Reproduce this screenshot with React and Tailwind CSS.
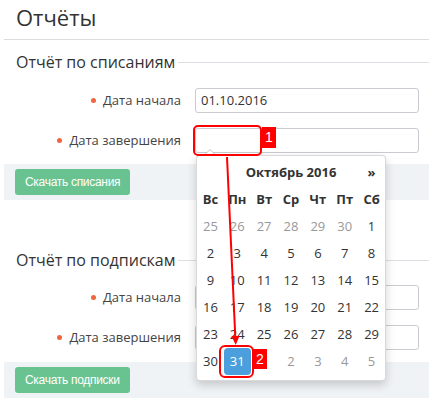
export default function App() {
  const weeks = [
    [25, 26, 27, 28, 29, 30, 1],
    [2, 3, 4, 5, 6, 7, 8],
    [9, 10, 11, 12, 13, 14, 15],
    [16, 17, 18, 19, 20, 21, 22],
    [23, 24, 25, 26, 27, 28, 29],
    [30, 31, 1, 2, 3, 4, 5],
  ];
  const days = ["Вс", "Пн", "Вт", "Ср", "Чт", "Пт", "Сб"];

  const Label = ({ text }) => (
    <div className="w-[177px] text-right text-[13px] text-[#444] leading-[25px]">
      <span className="inline-block w-[5px] h-[5px] rounded-full bg-[#f0653c] mr-[7px] align-middle relative -top-[1px]"></span>
      {text}
    </div>
  );
  const Input = ({ value }) => (
    <div className="ml-[14px] w-[224px] h-[25px] border border-[#c8ccd1] rounded-[3px] px-[5px] text-[13px] leading-[23px] text-[#333]">
      {value}
    </div>
  );
  const Heading = ({ text, mt }) => (
    <div className={`${mt} h-[22px] flex items-center pl-3 gap-[3px]`}>
      <span className="text-[16px] text-[#333] whitespace-nowrap">{text}</span>
      <div className="flex-1 h-px bg-[#dcdfe3]"></div>
    </div>
  );
  const Footer = ({ mt, text }) => (
    <div className={`${mt} h-[36px] bg-[#f0f3f6] pl-[11px] flex items-center`}>
      <div className="h-[26px] px-[10px] rounded-[3px] bg-[#68c390] text-white text-[12px] tracking-[-0.3px] leading-[26px] font-['Liberation_Sans',Arial,sans-serif]">
        {text}
      </div>
    </div>
  );

  return (
    <div className="relative w-[429px] h-[400px] overflow-hidden bg-white pl-[4px] font-['Open_Sans',sans-serif]">
      <div className="h-[40px] border-b border-[#dcdcdc] pl-3 pt-[2px] text-[22px] leading-[30px] text-[#333]">
        Отчёты
      </div>

      <Heading text="Отчёт по списаниям" mt="mt-[11px]" />
      <div className="mt-[15px] flex items-center">
        <Label text="Дата начала" />
        <Input value="01.10.2016" />
      </div>
      <div className="mt-[15px] flex items-center">
        <Label text="Дата завершения" />
        <Input value="" />
      </div>
      <Footer mt="mt-[11px]" text="Скачать списания" />

      <Heading text="Отчёт по подпискам" mt="mt-[49px]" />
      <div className="mt-[14px] flex items-center">
        <Label text="Дата начала" />
        <Input value="" />
      </div>
      <div className="mt-[15px] flex items-center">
        <Label text="Дата завершения" />
        <Input value="" />
      </div>
      <Footer mt="mt-[12px]" text="Скачать подписки" />

      {/* Datepicker popup */}
      <div className="absolute left-[196px] top-[155px] w-[190px] bg-white border border-black/15 rounded-[4px] shadow-[0_4px_10px_rgba(0,0,0,0.18)] pt-[3px] pb-[5px] text-[13px] text-[#333]">
        <div className="absolute -top-[7px] left-[6px] w-0 h-0 border-l-[7px] border-r-[7px] border-b-[7px] border-l-transparent border-r-transparent border-b-[#c4c4c4]"></div>
        <div className="absolute -top-[6px] left-[7px] w-0 h-0 border-l-[6px] border-r-[6px] border-b-[6px] border-l-transparent border-r-transparent border-b-white"></div>
        <div className="grid grid-cols-7">
          <div className="h-[27px]"></div>
          <div className="col-span-5 h-[27px] flex items-center justify-center font-bold">Октябрь 2016</div>
          <div className="h-[27px] flex items-center justify-center font-bold">»</div>
          {days.map((d) => (
            <div key={d} className="h-[27px] flex items-center justify-center font-bold">{d}</div>
          ))}
          {weeks.map((w, ri) =>
            w.map((n, ci) => {
              const muted = (ri === 0 && ci < 6) || (ri === 5 && ci > 1);
              const active = ri === 5 && ci === 1;
              if (active) {
                return (
                  <div key={`${ri}-${ci}`} className="h-[27px] flex items-center justify-center">
                    <div className="w-[28px] h-[27px] rounded-[4px] bg-[#4a9fdc] text-white flex items-center justify-center">{n}</div>
                  </div>
                );
              }
              return (
                <div key={`${ri}-${ci}`} className={`h-[27px] flex items-center justify-center ${muted ? "text-[#999]" : "text-[#333]"}`}>
                  {n}
                </div>
              );
            })
          )}
        </div>
      </div>

      {/* Annotations */}
      <div className="absolute left-[193px] top-[125px] w-[69px] h-[31px] border-2 border-[#f00] rounded-[5px]"></div>
      <div className="absolute left-[262px] top-[127px] w-[14px] h-[21px] bg-[#f00] text-white text-[14px] flex items-center justify-center font-['Liberation_Sans',Arial,sans-serif]">1</div>
      <svg className="absolute left-0 top-0 pointer-events-none" width="429" height="400">
        <line x1="227" y1="157" x2="235.3" y2="337" stroke="#f00" strokeWidth="2" />
        <polygon points="231.5,336 239.5,336 235.7,345" fill="#f00" />
      </svg>
      <div className="absolute left-[219px] top-[345px] w-[35px] h-[33px] border-2 border-[#f00] rounded-[6px]"></div>
      <div className="absolute left-[253px] top-[349px] w-[14px] h-[20px] bg-[#f00] text-white text-[14px] flex items-center justify-center font-['Liberation_Sans',Arial,sans-serif]">2</div>
    </div>
  );
}
